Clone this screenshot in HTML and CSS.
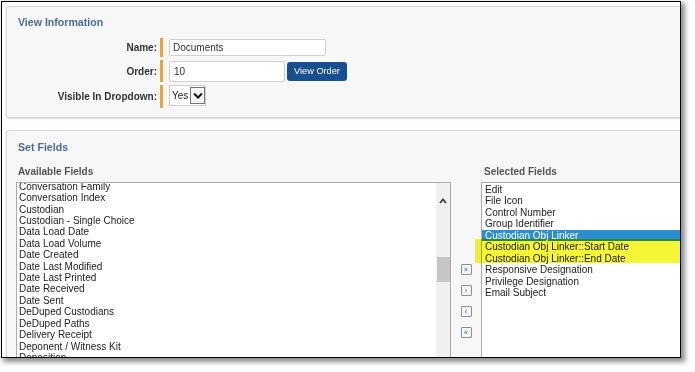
FILE: index.html
```html
<!DOCTYPE html>
<html>
<head>
<meta charset="utf-8">
<link rel="stylesheet" href="styles.css">
</head>
<body>
<div class="frame">
  <section class="panel info">
    <h2 class="title">View Information</h2>
    <div class="row r1">
      <label class="lbl">Name:</label><span class="bar"></span>
      <div class="input name">Documents</div>
    </div>
    <div class="row r2">
      <label class="lbl">Order:</label><span class="bar"></span>
      <div class="input order">10</div>
      <button class="btn">View Order</button>
    </div>
    <div class="row r3">
      <label class="lbl">Visible In Dropdown:</label><span class="bar"></span>
      <div class="select"><span>Yes</span><span class="arrow"><svg width="10" height="7" viewBox="0 0 10 7"><polyline points="1,1.5 5,5.5 9,1.5" fill="none" stroke="#111" stroke-width="2"/></svg></span></div>
    </div>
  </section>
  <section class="panel fields">
    <h2 class="title">Set Fields</h2>
    <div class="cols">
      <div class="avail">
        <div class="col-label">Available Fields</div>
        <div class="listbox">
          <ul class="items shifted">
            <li>Conversation Family</li>
            <li>Conversation Index</li>
            <li>Custodian</li>
            <li>Custodian - Single Choice</li>
            <li>Data Load Date</li>
            <li>Data Load Volume</li>
            <li>Date Created</li>
            <li>Date Last Modified</li>
            <li>Date Last Printed</li>
            <li>Date Received</li>
            <li>Date Sent</li>
            <li>DeDuped Custodians</li>
            <li>DeDuped Paths</li>
            <li>Delivery Receipt</li>
            <li>Deponent / Witness Kit</li>
            <li>Deposition</li>
          </ul>
          <div class="scrollbar">
            <div class="up"><svg width="8" height="6" viewBox="0 0 8 6"><polyline points="1,5 4,1.5 7,5" fill="none" stroke="#404040" stroke-width="1.8"/></svg></div>
            <div class="thumb"></div>
          </div>
        </div>
      </div>
      <div class="movers">
        <span class="mv">&raquo;</span>
        <span class="mv">&rsaquo;</span>
        <span class="mv">&lsaquo;</span>
        <span class="mv">&laquo;</span>
      </div>
      <div class="sel">
        <div class="col-label sel-label">Selected Fields</div>
        <div class="sel-wrap">
          <div class="listbox">
            <ul class="items sel-items">
              <li>Edit</li>
              <li>File Icon</li>
              <li>Control Number</li>
              <li>Group Identifier</li>
              <li class="active">Custodian Obj Linker</li>
              <li>Custodian Obj Linker::Start Date</li>
              <li>Custodian Obj Linker::End Date</li>
              <li>Responsive Designation</li>
              <li>Privilege Designation</li>
              <li>Email Subject</li>
            </ul>
          </div>
          <div class="marker"></div>
        </div>
      </div>
    </div>
  </section>
</div>
</body>
</html>
```
FILE: styles.css
```css
html, body {
  margin: 0;
  padding: 0;
  background: #fff;
}
body {
  width: 695px;
  height: 372px;
  overflow: hidden;
  font-family: "Liberation Sans", Arial, sans-serif;
}
.frame {
  box-sizing: border-box;
  width: 680px;
  height: 357px;
  margin: 1px 0 0 1px;
  border: 1px solid #000;
  background: #fff;
  overflow: hidden;
  padding: 4px 0 0 4px;
  box-shadow: 3px 3px 5px 1px rgba(0,0,0,0.45);
}
.panel {
  box-sizing: border-box;
  width: 700px;
  background: #f7f7f7;
  border: 1px solid #d6d6d6;
  border-radius: 3px;
  box-shadow: 0 1px 2px rgba(0,0,0,0.15);
}
.title {
  margin: 0 0 9px 11px;
  font-size: 10.6px;
  line-height: 14px;
  font-weight: bold;
  color: #4b6c9a;
}
.info {
  padding: 8px 0 9px 0;
}
.row {
  display: flex;
  align-items: center;
  margin-bottom: 3px;
}
.r1 { height: 19px; }
.r2 { height: 22px; }
.r3 { height: 23px; margin-bottom: 0; }
.lbl {
  width: 150px;
  text-align: right;
  font-size: 10px;
  font-weight: bold;
  color: #333;
}
.bar {
  align-self: stretch;
  width: 3px;
  background: #e8a53c;
  margin: 0 6px 0 3px;
}
.input {
  box-sizing: border-box;
  display: flex;
  align-items: center;
  background: #fff;
  border: 1px solid #cfcfcf;
  border-radius: 2px;
  font-size: 10px;
  color: #333;
  padding-left: 3px;
}
.name { width: 157px; height: 17px; }
.order { width: 116px; height: 21px; padding-left: 4px; }
.btn {
  margin-left: 2px;
  width: 60px;
  height: 19px;
  background: #184f91;
  color: #fff;
  border: 0;
  border-radius: 3px;
  font-family: "Liberation Sans", Arial, sans-serif;
  font-size: 9.2px;
  padding: 0;
}
.select {
  box-sizing: border-box;
  align-self: flex-start;
  display: flex;
  align-items: center;
  width: 37px;
  height: 21px;
  border: 1px solid #cfcfcf;
  background: #fff;
  padding-left: 2px;
  font-size: 10px;
  color: #222;
}
.arrow {
  box-sizing: border-box;
  margin-left: auto;
  width: 15px;
  height: 17px;
  border: 1px solid #777;
  background: #f4f4f4;
  display: flex;
  align-items: center;
  justify-content: center;
}
.fields {
  margin-top: 12px;
  padding: 9px 0 0 9px;
  height: 320px;
}
.fields .title {
  margin: 0 0 12px 2px;
}
.cols {
  display: flex;
}
.col-label {
  font-size: 10px;
  line-height: 12px;
  font-weight: bold;
  color: #555;
  margin-bottom: 4px;
  padding-left: 2px;
}
.sel-label { padding-left: 3px; }
.avail { width: 435px; }
.listbox {
  box-sizing: border-box;
  height: 200px;
  border: 1px solid #ababab;
  background: #fff;
  display: flex;
  overflow: hidden;
}
.items {
  flex: 1;
  margin: 0;
  padding: 0;
  list-style: none;
  font-size: 10px;
  line-height: 11.4px;
  color: #222;
  white-space: nowrap;
}
.items li { padding-left: 2px; }
.shifted { margin-top: -2.2px; }
.sel-items {
  margin-top: 0.5px;
  line-height: 11.55px;
}
.sel-items li { padding-left: 3px; }
.items li.active {
  background: #2c8dd0;
  color: #fff;
}
.scrollbar {
  width: 14px;
  background: #f0f0f0;
  display: flex;
  flex-direction: column;
  align-items: center;
}
.up {
  height: 36px;
  display: flex;
  align-items: center;
  justify-content: center;
}
.thumb {
  margin-top: 38px;
  width: 13px;
  height: 25px;
  background: #c6c6c6;
}
.movers {
  width: 30px;
  padding-top: 98px;
  display: flex;
  flex-direction: column;
  align-items: center;
  gap: 10px;
}
.mv {
  box-sizing: border-box;
  width: 11px;
  height: 11px;
  border: 1px solid #8a8f98;
  background: #f4f6f9;
  border-radius: 1px;
  font-size: 7px;
  line-height: 9px;
  text-align: center;
  color: #4a5a6e;
}
.sel { flex: 1; }
.sel-wrap { position: relative; }
.marker {
  position: absolute;
  left: -6px;
  right: 0;
  top: 57px;
  height: 24px;
  background: #f6f638;
  mix-blend-mode: multiply;
}
```
